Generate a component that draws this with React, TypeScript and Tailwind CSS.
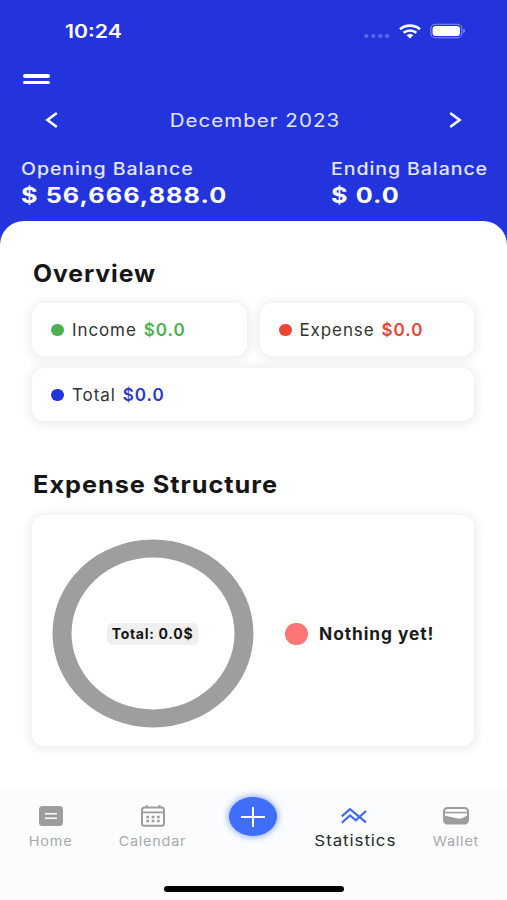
import clsx from "clsx";
import type { ReactNode } from "react";

function StatusBar() {
  return (
    <div className="flex h-[62px] items-center justify-between pr-[41px] pl-[65px] text-white">
      <span className="mt-[2px] inline-block origin-left scale-x-[1.18] text-[18px] leading-none font-semibold">
        10:24
      </span>
      <div className="flex items-center">
        <svg width="26" height="6" viewBox="0 0 26 6" className="mt-[9px]" fill="#5b66ea">
          <ellipse cx="2.4" cy="3" rx="2.2" ry="2" />
          <ellipse cx="9.3" cy="3" rx="2.2" ry="2" />
          <ellipse cx="16.2" cy="3" rx="2.2" ry="2" />
          <ellipse cx="23.1" cy="3" rx="2.2" ry="2" />
        </svg>
        <svg
          width="22"
          height="15"
          viewBox="0 0 22 15"
          className="ml-[9px]"
          fill="none"
          stroke="#fff"
          strokeWidth="2.6"
        >
          <path d="M1 5.2C6.6 0.4 15.4 0.4 21 5.2" />
          <path d="M4.6 8.8C8.3 5.7 13.7 5.7 17.4 8.8" />
          <path d="M7.6 11.2C9.5 9.5 12.5 9.5 14.4 11.2L11 14.4Z" fill="#fff" stroke="none" />
        </svg>
        <svg width="36" height="16" viewBox="0 0 36 16" className="ml-[9px]">
          <rect x="0.8" y="1.3" width="31" height="13.4" rx="4.5" fill="none" stroke="#858df2" strokeWidth="1.1" />
          <rect x="2.6" y="3" width="27.4" height="10" rx="3" fill="#fff" />
          <path d="M33.2 5.8C35.6 6.6 35.6 9.4 33.2 10.2Z" fill="#858df2" />
        </svg>
      </div>
    </div>
  );
}

function Balance({ label, amount }: { label: string; amount: string }) {
  return (
    <div className="flex flex-col items-start whitespace-nowrap text-white">
      <span className="origin-left scale-x-[1.15] text-[17px] leading-[26px] font-medium tracking-[0.8px] text-[#e4e6fd]">
        {label}
      </span>
      <span className="origin-left scale-x-[1.2] text-[21px] leading-7 font-bold tracking-[0.9px]">
        {amount}
      </span>
    </div>
  );
}

function Header() {
  return (
    <header className="h-[221px] bg-[#2334dc]">
      <StatusBar />
      <button aria-label="Menu" className="mt-3 ml-[23px] flex flex-col gap-[3px]">
        <span className="h-[3.5px] w-[27px] rounded-full bg-white" />
        <span className="h-[3.5px] w-[27px] rounded-full bg-white" />
      </button>
      <div className="mt-[19px] flex h-[34px] items-center justify-between px-[45px] text-white">
        <svg width="13" height="18" viewBox="0 0 13 18" fill="none" stroke="currentColor" strokeWidth="2.6">
          <path d="M11.8 2L2.4 9L11.8 16" />
        </svg>
        <span className="scale-x-[1.14] pl-[2px] text-[18px] tracking-[0.9px] text-[#e4e6fd]">
          December 2023
        </span>
        <svg width="13" height="18" viewBox="0 0 13 18" fill="none" stroke="currentColor" strokeWidth="2.6">
          <path d="M1.2 2L10.6 9L1.2 16" />
        </svg>
      </div>
      <div className="mt-[19px] grid grid-cols-[310px_1fr] pl-[21px]">
        <Balance label="Opening Balance" amount="$ 56,666,888.0" />
        <Balance label="Ending Balance" amount="$ 0.0" />
      </div>
    </header>
  );
}

function Card({ className, children }: { className?: string; children: ReactNode }) {
  return (
    <div
      className={clsx(
        "flex items-center rounded-xl bg-white shadow-[0_1px_10px_3px_rgba(0,0,0,0.07)]",
        className,
      )}
    >
      {children}
    </div>
  );
}

type StatProps = { label: string; dot: string; text: string; className?: string };

function StatCard({ label, dot, text, className }: StatProps) {
  return (
    <Card className={clsx("h-[53px] pl-[19px] text-[17px]", className)}>
      <span className={clsx("h-3 w-[13px] rounded-full", dot)} />
      <span className="mt-[2px] ml-2 tracking-[0.9px] text-[#333]">{label}</span>
      <span className={clsx("mt-[2px] ml-[7px] font-semibold tracking-[1px]", text)}>$0.0</span>
    </Card>
  );
}

function SectionTitle({ className, children }: { className?: string; children: ReactNode }) {
  return (
    <h2
      className={clsx(
        "origin-left pl-px text-2xl leading-8 font-bold tracking-[0.9px] text-[#161616]",
        className,
      )}
    >
      {children}
    </h2>
  );
}

function ExpenseStructure() {
  return (
    <Card className="mt-[14px] mr-px h-[231px] pt-[6px] pl-5">
      <div className="grid place-items-center">
        <svg width="202" height="189" viewBox="0 0 202 189" className="col-start-1 row-start-1">
          <path
            fill="#9e9e9e"
            fillRule="evenodd"
            d="M0.5 94.5A100.5 94 0 0 1 201.5 94.5A100.5 94 0 0 1 0.5 94.5ZM19.5 94.5A81.5 76 0 0 0 182.5 94.5A81.5 76 0 0 0 19.5 94.5Z"
          />
        </svg>
        <span className="col-start-1 row-start-1 mr-px flex h-[22px] w-[91px] items-center justify-center rounded-[5px] bg-[#efefef] text-sm font-bold tracking-[0.7px] whitespace-nowrap text-[#151515]">
          Total: 0.0$
        </span>
      </div>
      <span className="ml-[31px] h-[22px] w-[23px] rounded-full bg-[#fd7575]" />
      <span className="mt-[2px] ml-[11px] origin-left scale-x-[1.02] text-[17px] font-bold tracking-[0.9px] whitespace-nowrap text-[#1b1b1b]">
        Nothing yet!
      </span>
    </Card>
  );
}

function HomeIcon() {
  return (
    <svg width="24" height="20" viewBox="0 0 24 20">
      <rect width="24" height="20" rx="3.5" fill="#9d9d9d" />
      <path d="M6 7.7H18M6 12.3H18" stroke="#fff" strokeWidth="1.6" />
    </svg>
  );
}

function CalendarIcon() {
  return (
    <svg width="24" height="22" viewBox="0 0 24 22" fill="none" stroke="#9d9d9d">
      <rect x="1" y="2.6" width="22" height="18.2" rx="2.5" strokeWidth="2" />
      <path d="M1 7.4H23" strokeWidth="1.8" />
      <path d="M5.6 0.3V3M18.4 0.3V3" strokeWidth="2.4" />
      <path d="M5.3 12H8.1M10.6 12H13.4M15.9 12H18.7M5.3 16H8.1M10.6 16H13.4M15.9 16H18.7" strokeWidth="2.4" />
    </svg>
  );
}

function StatisticsIcon() {
  return (
    <svg width="26" height="18" viewBox="0 0 26 18" fill="none" stroke="#3f6bea" strokeWidth="2.2">
      <path d="M0.8 9.4L9 2.2L25 15.4" />
      <path d="M0.8 15.8L9 8.4L14.8 13.4L25 4" />
    </svg>
  );
}

function WalletIcon() {
  return (
    <svg width="26" height="18" viewBox="0 0 26 18">
      <rect x="1" y="1" width="24" height="15.6" rx="3.5" fill="#fbfcfe" stroke="#9d9d9d" strokeWidth="2" />
      <path d="M2 5.6H24" stroke="#9d9d9d" strokeWidth="1.5" />
      <path d="M1 8.6L15 11.6C17 12 18.5 11.6 20 10.8L25 8V13C25 15.8 23.8 17 21 17H5C2.2 17 1 15.8 1 13Z" fill="#9d9d9d" />
    </svg>
  );
}

function NavItem({ label, icon, className }: { label: string; icon: ReactNode; className?: string }) {
  return (
    <div className="flex w-[102px] flex-col items-center">
      <div className="flex h-6 items-center">{icon}</div>
      <span
        className={clsx(
          "mt-[3px] leading-[20px] whitespace-nowrap",
          className ?? "scale-x-[1.11] text-[13px] tracking-[0.7px] text-[#a9a9ab]",
        )}
      >
        {label}
      </span>
    </div>
  );
}

function BottomNav() {
  return (
    <nav className="flex h-[112px] flex-col items-center justify-between bg-[#fafcfe] pb-2">
      <div className="flex w-full pt-4">
        <NavItem label="Home" icon={<HomeIcon />} />
        <NavItem label="Calendar" icon={<CalendarIcon />} />
        <div className="flex w-[100px] justify-center">
          <button
            aria-label="Add"
            className="-mt-[7px] flex h-[39px] w-12 items-center justify-center rounded-[50%] bg-[#3f6ffa] shadow-[0_0_6px_1px_rgba(63,111,250,0.6)]"
          >
            <svg width="24" height="20" viewBox="0 0 24 20" stroke="#fff" strokeWidth="2">
              <path d="M0 10H24M12 0V20" />
            </svg>
          </button>
        </div>
        <NavItem
          label="Statistics"
          icon={<StatisticsIcon />}
          className="scale-x-[1.13] pl-px text-[15px] tracking-[0.8px] text-[#2b2b2b]"
        />
        <NavItem label="Wallet" icon={<WalletIcon />} />
      </div>
      <div className="h-[6px] w-[180px] rounded-full bg-black" />
    </nav>
  );
}

export default function App() {
  return (
    <div className="flex h-[900px] w-[507px] flex-col overflow-hidden bg-[#2334dc] font-['Inter',sans-serif]">
      <Header />
      <main className="flex-1 rounded-t-[24px] bg-white px-8 pt-[37px]">
        <SectionTitle className="scale-x-[1.03]">Overview</SectionTitle>
        <div className="mt-[13px] grid grid-cols-2 gap-x-[13px] gap-y-3 pr-px">
          <StatCard label="Income" dot="bg-[#4caf50]" text="text-[#4caf50]" />
          <StatCard label="Expense" dot="bg-[#ee4436]" text="text-[#e5453a]" />
          <StatCard label="Total" dot="bg-[#2334dc]" text="text-[#2b37c8]" className="col-span-2" />
        </div>
        <SectionTitle className="mt-12 scale-x-[1.055]">Expense Structure</SectionTitle>
        <ExpenseStructure />
      </main>
      <BottomNav />
    </div>
  );
}
